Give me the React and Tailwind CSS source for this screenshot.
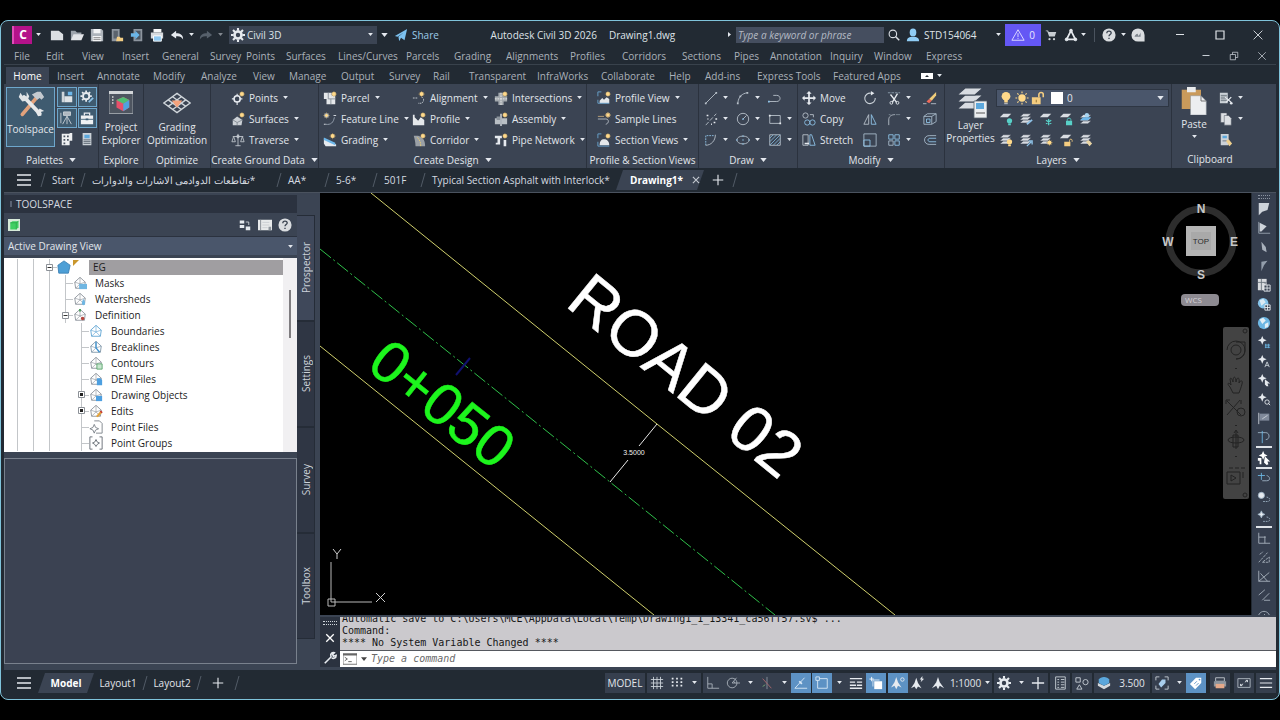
import React, { useState } from 'react';

const Caret = ({ big, className = '' }) => (
  <svg viewBox="0 0 8 5" className={`shrink-0 ${big ? 'w-[7px] h-1' : 'w-[5px] h-[3px]'} ${className}`}>
    <path d="M0 0h8L4 5z" fill="#e4e8ee" />
  </svg>
);

const Sun = ({ x = 12.5, y = 3.5 }) => (
  <g transform={`translate(${x} ${y})`}>
    <path d="M0-3.6V3.6M-3.6 0H3.6M-2.4-2.4 2.4 2.4M2.4-2.4-2.4 2.4" stroke="#b99a5c" strokeWidth=".8" />
    <circle r="2.3" fill="#ffd98a" />
  </g>
);

const Sheets = ({ y = 0 }) => (
  <g transform={`translate(0 ${y})`} fill="#d8dce2" stroke="#3b4453" strokeWidth=".6">
    <path d="M1 12.5 5 9h9l-4 3.5z" />
    <path d="M1 9 5 5.500h9L10 9z" />
    <path d="M1 5.500 5 2h9l-4 3.500z" />
  </g>
);

const W = '#e6eaef';
const B = '#8fc3e8';

// glyphs share a 16x16 grid
const glyphs = {
  // quick access
  newFile: <path d="M1 3h9l5 4v7H1z" fill="#dcdfe3" />,
  open: <g><path d="M1 14V3h5l2 2h5v2" fill="#9da4ac" /><path d="M1 14 4 7h12l-3 7z" fill="#e3e5e8" /></g>,
  save: <g><path d="M1 1h12l2 2v12H1z" fill="#aeb4bb" /><path d="M4 1h8v5H4zM3 9h10v6H3z" fill="#f2f3f4" /><path d="M4 11h8M4 13h8" stroke="#666" strokeWidth=".8" /></g>,
  cloudOpen: <g><path d="M2 1h9v14H2z" fill="#8d959e" /><path d="M4 3h5v9H4z" fill="#5b636d" /><path d="m7 15 1-5h3l1 1h3v4z" fill="#f2cd84" /></g>,
  cloudSave: <g><path d="M4 1h10v14H4z" fill="#8d959e" /><path d="M6 3h6v10H6z" fill="#4c5661" /><path d="M1 6h5V3l5 5-5 5v-3H1z" fill="#6bb6e8" /></g>,
  print: <g><path d="M4 1h9v4H4z" fill="#f5f6f7" /><path d="M1 5h14v7H1z" fill="#d5d9dd" /><path d="M4 9h9v6H4z" fill="#8fc8f0" stroke="#fff" /></g>,
  undo: <path d="M7 3 1 8l6 4V9.500c4-.5 6 .5 8 3.500 0-5-3-7-8-7z" fill={W} />,
  redo: <path d="m9 3 6 5-6 4V9.500c-4-.5-6 .5-8 3.500 0-5 3-7 8-7z" fill="#56606b" />,
  gear: <g><circle cx="8" cy="8" r="4" fill="none" stroke={W} strokeWidth="3" /><path d="M8 0v3M8 13v3M0 8h3M13 8h3M2.300 2.300l2.200 2.200M11.500 11.500l2.200 2.200M13.700 2.300l-2.200 2.200M4.500 11.500l-2.200 2.200" stroke={W} strokeWidth="2.400" /></g>,
  plane: <path d="M1 9 15 1l-3 13-4-3-2 4-1-5 6-5-7 5z" fill="#7cc1ef" />,
  search: <g fill="none" stroke="#d7dce2" strokeWidth="1.500"><circle cx="6.500" cy="6.500" r="5" /><path d="m10 10 5 5" strokeWidth="2" /></g>,
  user: <g fill="#90cdf5"><ellipse cx="8" cy="5" rx="3.800" ry="4.500" /><path d="M1 15c0-4 3-5 7-5s7 1 7 5z" /></g>,
  warn: <g fill="none" stroke="#e9e7ff"><path d="M8 2 15 14H1z" /><path d="M8 6v4.500M8 11.500v1" /></g>,
  cart: <g fill="#c8cdd2"><path d="M1 2h3l1 2h10l-2 6H5.500L3 3H1z" /><circle cx="6" cy="13.500" r="1.500" /><circle cx="12" cy="13.500" r="1.500" /></g>,
  adsk: <g fill="none" stroke={W}><path d="M8 3 3 13h10z" strokeWidth="2" /><circle cx="8" cy="3" r="1.600" fill={W} /><circle cx="3" cy="13" r="1.600" fill={W} /><circle cx="13" cy="13" r="1.600" fill={W} /></g>,
  help: <g><circle cx="8" cy="8" r="7.500" fill="#dadde0" /><path d="M5.500 6c0-3.500 5-3 5-.3C10.500 7.500 8 7.600 8 9.500M8 11v1.600" fill="none" stroke="#3a4350" strokeWidth="1.500" /></g>,
  badge: <g><path d="M8 .5A7.500 7.500 0 0 0 8 15.500h7.500V8A7.500 7.500 0 0 0 8 .5z" fill="#dadde0" /><path d="M4 10c2-4 4-4 4-2s2 0 3-3v5z" fill="#7d848c" /></g>,
  // ribbon
  tools: <g strokeLinecap="round"><path d="M11.500 4 3 14" stroke="#e2a27c" strokeWidth="2" /><path d="m4 4 9 9.500" stroke="#e6e8ea" strokeWidth="2.200" /><path d="M2 1.500 1 4l2 2.500 3-.5 1-2.500L5.500 1v2.500L3.500 4z" fill="#dfe3e6" /><path d="m8.500 2.500 3-1.500h2L15.500 4 14 5.500l-1-1-1.500 1z" fill="#c4cad0" /><path d="m11 13 2-2.500 2.500 1.500-2 .5.500 2-2 .5z" fill="#e6e8ea" /></g>,
  prospector: <g><path d="M2 2h3v12H2z" fill="#cfd5da" /><path d="M5 7h9v7H5z" fill="#dfe3e6" /><path d="M9 2h5v4H9z" fill="#6db7ea" /></g>,
  settingsG: <g><circle cx="7" cy="7" r="3.600" fill="none" stroke={W} strokeWidth="2.200" /><path d="M7 .5v2M7 11.500v2M.5 7h2M11.500 7h2M2.400 2.400l1.500 1.500M11.600 2.400l-1.500 1.500M2.400 11.600l1.500-1.500" stroke={W} strokeWidth="2" /><path d="m10 14 5-5" stroke={B} strokeWidth="2" /></g>,
  tripod: <g stroke="#ccd2d8" fill="none"><path d="M8 6 3 15M8 6l5 9M8 6v9M1 2v12" /><path d="M4 1h8v4H4z" fill="#aeb6be" /></g>,
  toolbox: <g><path d="M1 5h14v10H1z" fill="#eef0f2" /><path d="M5 5V2.500h6V5" fill="none" stroke={W} strokeWidth="1.500" /><path d="M1 9.500h14" stroke="#3a5d75" /><path d="M6.500 8.500h3v2h-3z" fill="#3a5d75" /></g>,
  building: <g><path d="M2 2h9v13H2zM11 1h3v9h-3z" fill="#eef0f2" /><path d="M4 4h2v2H4zM8 4h2v2H8zM4 8h2v2H4zM8 8h2v2H8zM4 12h2v2H4z" fill="#4a5361" /></g>,
  sheetSet: <g><path d="M3 1h10v14H3z" fill="#ccd2d8" /><path d="M5 3h6v4H5z" fill="#5da8dc" /><path d="M4 9h8M4 11h8M4 13h8" stroke="#56606b" /></g>,
  explorer: <g><path d="M0 0h16v15H0z" fill="#4e5560" stroke="#a1a7ae" strokeWidth=".6" /><path d="M0 0h16v2H0z" fill="#d3d6d9" /><path d="M2 4h1M2 6h1M2 8h1" stroke="#ddd" /><path d="m9.500 4 4 2v5l-4 2.500L5 11V6z" fill="#e7506b" /><path d="m9.500 4 4 2-4 2.500L5 6z" fill="#4fbf75" /><path d="m13.500 6-4 2.500v5l4-2.500z" fill="#4fa3e0" /></g>,
  grading: <g fill="none" stroke="#cfd5da" strokeWidth=".8"><path d="m8 2.500 7.500 5.500L8 13.500.5 8z" /><path d="M5.500 4.400 13 9.900M3 6.200l7.500 5.500M10.500 4.400 3 9.900M13 6.200l-7.500 5.500" /><path d="M5 6.500h6L8 10.500z" fill="#f4a27c" stroke="none" /></g>,
  points: <g><circle cx="7" cy="9" r="3.500" fill="none" stroke={W} strokeWidth="1.800" /><path d="M7 3v3M7 12v4M1 9h3M10 9h3" stroke={W} strokeWidth="1.300" /><Sun /></g>,
  surfaces: <g><path d="m2 9 5-4 6 4-1 6H2z" fill="#ccd1d6" /><path d="m2 9 5 3 6-3M7 12v3" stroke="#7f8891" fill="none" /><Sun /></g>,
  traverse: <g fill="none" stroke="#bec5cc"><path d="M2 4h12M8 1v14M3 4 1 10h4zM13 4l-2 6h4zM5 14.500h6" /><circle cx="8" cy="4" r="1.500" fill="#bec5cc" /></g>,
  parcel: <g><path d="M1 2h9v3h4v10H4V9H1z" fill="#e4e7ea" /><path d="M6 2v7h8M9 9v6" stroke="#848c95" fill="none" /><Sun /></g>,
  feature: <g fill="none" stroke="#9aa6b3"><path d="M3 14c6 1 9-2 10-8" /><path d="M1 14h2M12 4h3" stroke={W} /><Sun x={4} y={4} /></g>,
  slope: <g><path d="m1 6 14 7v2H3L1 12z" fill={W} /><path d="m1 5 13 6v3L1 8z" fill="#6db7ea" /><Sun x={11} y={3.5} /></g>,
  align: <g><path d="M1 8h6M11 7c3 1 3 5 0 7H7" fill="none" stroke="#ccd2d8" strokeDasharray="2 1" /><Sun x={11} /></g>,
  profile: <g><path d="M1 3h2v3l4 4 3-4 4 3v6H1z" fill="#e4e7ea" /><Sun /></g>,
  corridor: <g><path d="M2 3h5c7 2 8 7 8 12H4c0-5-1-8-2-12z" fill="#9aa0a6" /><path d="M6 5c3 3 4 6 4 10" stroke="#f0cf6a" strokeDasharray="2 1" fill="none" /><Sun /></g>,
  intersect: <g><path d="M5 2h6v14H5zM1 6h14v6H1z" fill="#a3a9ae" /><path d="M8 2v14M1 9h14" stroke="#eee" strokeDasharray="2 1" /><Sun /></g>,
  assembly: <g><path d="M1 7h6v7H1zM9 7h6v7H9z" fill="#b9bfc5" /><path d="M8 2v14" stroke={W} strokeWidth="1.500" /><path d="M3 5h4v4H3z" fill="#8b939b" /><Sun /></g>,
  pipe: <g><path d="M1 3h8v3H7v7H2v-2h2V6H1z" fill={W} /><path d="M11 8h3v7h-3z" fill={W} /><Sun /></g>,
  profView: <g><path d="M3 5v6l3-3 2 2 3-3 3 2v5H3z" fill="#e4e7ea" /><path d="M1 6V1h4M1 10v4h13" fill="none" stroke="#6aa7d4" /><Sun /></g>,
  sample: <g fill="none" stroke="#c3a87b"><path d="M1 8h9c4 0 4 5 0 6" stroke="#b9c1c9" /><path d="M1 5h7" /><Sun /></g>,
  secView: <g><path d="M3 14c0-5 2-7 5-7s6 2 6 7z" fill="#e4e7ea" /><path d="M1 6V1h4M1 10v5h13" fill="none" stroke="#6aa7d4" /><Sun /></g>,
  line: <g stroke="#b9c2cb" fill="#b9c2cb"><path d="M2 14 14 2" /><path d="M1 13h2v2H1zM13 1h2v2h-2z" stroke="none" /></g>,
  arc: <g stroke="#b9c2cb" fill="none"><path d="M2 14C3 6 7 3 13 2" /><path d="M1 13h2v2H1zM12 1h2v2h-2zM4 5h2v2H4z" fill="#b9c2cb" stroke="none" /></g>,
  pline: <g stroke="#b9c2cb" fill="none"><path d="M1 12h9c5 0 5-7 0-7H6" /><path d="M0 11h2v2H0z" fill={B} stroke="none" /></g>,
  dots: <g stroke="#b9c2cb"><path d="M2 15 14 2" strokeDasharray="5 2" /><path d="M3 4h2M11 12h2M4 8h1M8 14h1M13 8h2" stroke={W} strokeWidth="1.500" /></g>,
  circle: <g stroke="#b9c2cb" fill="none"><circle cx="8" cy="8" r="6.500" /><path d="m8 8 4-4" /><circle cx="8" cy="8" r="1" fill={B} stroke="none" /></g>,
  rect: <g stroke="#b9c2cb" fill="none"><path d="M2 4h12v9H2z" /><path d="M1 3h2v2H1zM13 12h2v2h-2z" fill={W} stroke="none" /></g>,
  spline: <g stroke="#b9c2cb" fill="none"><path d="M2 14V3h10" strokeDasharray="2 1" stroke={B} /><path d="M2 14c6 0 11-5 11-12" /></g>,
  ellipse: <g stroke="#b9c2cb" fill="none"><ellipse cx="8" cy="8" rx="7" ry="4.500" /><path d="M8 7v2M1 7v2M15 7v2M7 3.500h2M7 12.500h2" stroke={B} /></g>,
  hatch: <g stroke="#7fb0d0" fill="none"><path d="M2 2h12v12H2z" stroke="#b9c2cb" /><path d="m2 6 4-4M2 10l8-8M2 14 14 2M6 14l8-8M10 14l4-4" /></g>,
  move: <path d="M8 0 5 3h2v4H3V5L0 8l3 3V9h4v4H5l3 3 3-3H9V9h4v2l3-3-3-3v2H9V3h2z" fill={W} />,
  copy: <g fill="none" stroke="#b9c2cb"><circle cx="4" cy="4" r="3" /><path d="M9 3h4v3" /><circle cx="6" cy="12" r="3" stroke={B} /><circle cx="12" cy="12" r="3" stroke={B} /></g>,
  stretch: <g fill="none" stroke="#b9c2cb"><path d="M1 2h6v12H1z" /><path d="m9 2 2 0 4 12H9z" stroke={B} /><path d="M3 12h5" stroke={W} strokeWidth="1.500" /></g>,
  rotate: <g fill="none" stroke="#ccd3da" strokeWidth="1.200"><path d="M9 2.500A6 6 0 1 0 14 8" /><path d="M9 0v5l4-2.500z" fill={W} stroke="none" /></g>,
  trim: <g fill="none" stroke={W}><path d="M4 4l7 9M12 3 6 13" strokeWidth="1.500" /><circle cx="5" cy="13.500" r="1.600" /><circle cx="12" cy="13.500" r="1.600" /><path d="M1 2h14" stroke="#8ea0b0" strokeDasharray="3 1" /></g>,
  erase: <g><path d="m15 1-8 8 3 2 5-6z" fill="#f0cd7a" /><path d="m7 9-3 3 3 2 3-3z" fill="#ef6a5a" /><path d="M0 14.500h4M9 14.500h6" stroke="#b9c2cb" /></g>,
  mirror: <g fill="none" stroke="#b9c2cb"><path d="M6.500 3v11H1z" /><path d="M9.500 3v11H15z" stroke={B} /></g>,
  fillet: <g fill="none" stroke="#b9c2cb"><path d="M2 15V9c0-4 3-6 7-6" /><path d="M10 3h5M2 3h2" stroke="#7c8896" /></g>,
  box: <g fill="none" stroke="#a9bccb"><path d="M1 5h9v9H1z" /><path d="m1 5 4-3h10v9l-5 3M10 5l5-3" /><path d="M4 8h4v4H4z" stroke={B} /></g>,
  scale: <g fill="none" stroke="#a9bccb"><path d="M1 1h14v14H1z" /><path d="M1 8h7v7H1z" stroke={B} /></g>,
  array: <g fill="none" stroke="#a9bccb"><path d="M2 2h5v5H2zM9 2h5v5H9zM9 9h5v5H9z" stroke={B} /><path d="M2 9h5v5H2z" /></g>,
  offset: <g fill="none" stroke="#a9bccb"><path d="M15 3H7C0 3 0 13 7 13h8" /><path d="M15 6H8c-3 0-3 4 0 4h7" stroke={B} /></g>,
  layersBig: <g><Sheets y={-1.5} /><path d="M9.500 7H16v8.500H9.500z" fill="#eceef0" stroke="#5b6470" strokeWidth=".4" /><path d="M10.500 8h4v3h-4z" fill="#5da8dc" /><path d="M10.500 13h4.500" stroke="#555" strokeWidth=".6" /></g>,
  bulb: <g><circle cx="8" cy="6" r="5" fill="#ffd98a" /><path d="M6 10h4v3H6z" fill="#ffd98a" /><path d="M6 14.500h4" stroke="#ddd" /></g>,
  sun: <g><circle cx="8" cy="8" r="4.200" fill="#ffd98a" /><path d="M8 .5v2M8 13.500v2M.5 8h2M13.500 8h2M2.700 2.700l1.400 1.400M11.900 11.900l1.400 1.400M13.300 2.700l-1.400 1.400M4.100 11.900l-1.400 1.400" stroke="#ffd98a" strokeWidth="1.300" /></g>,
  unlock: <g><path d="M1 7h10v8H1z" fill="#f5cd80" /><path d="M9 7V4c0-3 5-3 5 0v3" fill="none" stroke="#f5cd80" strokeWidth="1.800" /><path d="M6 10v3" stroke="#8a6a2c" /></g>,
  lay1: <g><path d="M1 6 5 2h9l-4 4z" fill="#d8dce2" /><circle cx="12" cy="10" r="3" fill="#58d0c8" /><path d="M10.500 13h3v2h-3z" fill="#58d0c8" /></g>,
  lay2: <g><Sheets /><path d="m9 14 6-5" stroke={B} strokeWidth="2" /></g>,
  lay3: <g><path d="M1 6 5 2h9l-4 4z" fill="#d8dce2" /><path d="M11 8v7M8 9.500l6 4M14 9.500l-6 4" stroke="#58d0c8" strokeWidth="1.500" /></g>,
  lay4: <g><path d="M1 6 5 2h9l-4 4z" fill="#d8dce2" /><path d="M8 10h7v5H8z" fill="#58d0c8" /><path d="M9.500 10V8.500c0-2 4-2 4 0V10" fill="none" stroke="#58d0c8" /></g>,
  lay5: <g><Sheets y={1} /><path d="M1 9.500 5 6h9l-4 3.500z" fill="#6db7ea" /><circle cx="9" cy="3.500" r="2.500" fill="#a8d5f2" /></g>,
  lay6: <g><Sheets /><circle cx="12" cy="10" r="3" fill="#ffd98a" /><path d="M10.500 13h3v2h-3z" fill="#ffd98a" /></g>,
  lay7: <g><Sheets /><path d="m9 15 5-5M11 9h4v4" stroke={B} strokeWidth="1.500" fill="none" /></g>,
  lay8: <g><Sheets /><Sun x={12} y={11} /></g>,
  lay9: <g><path d="M1 6 5 2h9l-4 4z" fill="#d8dce2" /><path d="M6 10h7v5H6z" fill="#f5cd80" /><path d="M12 10V8.500c0-2 3-2 3 0V10" fill="none" stroke="#f5cd80" /></g>,
  lay10: <g><Sheets /><path d="m8 10 3-2 4 4-3 3z" fill="#e9d5a5" /></g>,
  paste: <g><path d="M1 1.500h11v11H1z" fill="#c99a5b" /><path d="M4 0h5v3H4z" fill="#e9ebed" /><path d="M6 5h6l3 3v8H6z" fill="#eceef0" stroke="#8b929a" strokeWidth=".3" /><path d="M12 5v3h3" fill="none" stroke="#666" strokeWidth=".5" /></g>,
  cut: <g><path d="M1 2h9v12H1z" fill="#ccd2d8" /><path d="M2 5h7M2 7h7M2 9h7M2 11h7" stroke="#68717c" /><path d="m7 7 7 6M14 7l-6 6" stroke={W} strokeWidth="1.500" /><circle cx="14" cy="14" r="1.500" fill={W} /></g>,
  copyClip: <g fill="#dde0e4" stroke="#4c5562" strokeWidth=".6"><path d="M2 1h7v11H2z" /><path d="M6 4h5l3 3v8H6z" /></g>,
  match: <g><path d="M2 1h9v13H2z" fill="#ccd2d8" /><path d="M4 3h5v3H4z" fill="#5da8dc" /><path d="M4 9h5" stroke="#68717c" /><path d="m8 9 3-2 4 5-3 3z" fill="#efd08e" /></g>,
  // toolspace header
  drawing: <g><path d="M0 0h16v16H0z" fill="#d7ead9" /><path d="M3 5 6 3h8v8l-3 3H3z" fill="#3fcf62" /><path d="M3 5h8v9M11 5l3-2" stroke="#2ba64a" fill="none" /></g>,
  panorama: <g fill={W}><path d="M1 2h6v4H1zM1 8h6v4H1zM9 10h6v5H9z" /><path d="M9 4h4v4" fill="none" stroke={W} /></g>,
  preview: <g><path d="M0 2h16v12H0z" fill="#e8eaeb" /><path d="M3 2v12" stroke="#7d848c" /><path d="M5 5h8M5 8h8M5 11h6" stroke="#b4b9be" strokeWidth=".6" /><path d="M12 10h3v4h-3z" fill="#8d949c" /></g>,
  // status bar
  grid: <path d="M4 1v14M8 1v14M12 1v14M1 4h14M1 8h14M1 12h14" stroke="#ccd2d9" fill="none" />,
  snapDots: <path d="M2 3h2M7 3h2M12 3h2M2 7h2M7 7h2M12 7h2M2 11h2M7 11h2M12 11h2" stroke={W} strokeWidth="1.800" />,
  ortho: <path d="M2 1v13h13M2 9h5v5" stroke="#aab2bc" fill="none" />,
  polar: <g fill="none" stroke="#aab2bc"><circle cx="7" cy="8" r="5.500" /><path d="M7 8h9M7 8l5-6M10 8a3 3 0 0 0-1-2" /></g>,
  iso: <g fill="none"><path d="M8 1v14" stroke="#8c95a0" /><path d="m3 3 10 11" stroke="#b06a70" /><path d="m3 12 3-2" stroke="#78a878" /></g>,
  otrack: <g stroke="#dbeaf7" fill="none"><path d="M1 14 12 2M1 14h14" /><path d="m6 6 3 3" strokeWidth="2" /></g>,
  osnap: <g fill="none" stroke="#dbeaf7"><path d="M3 3h11v11H3z" /><path d="M1 1h4v4H1z" fill="#5d92c4" /></g>,
  lineweight: <path d="M1 3h14M1 7h6M9 7h6M1 10.500h7M9 10.500h6M1 14h14" stroke={W} strokeWidth="1.700" />,
  cycling: <g fill="#fff"><path d="M6 6h9v9H6z" /><path d="M3 1v5M.5 3.500h5" stroke="#fff" /><path d="M4 4h8v1H5v7H4z" fill="#d7e6f3" /></g>,
  annoA: <g fill={W}><path d="m6 1 2 6 4 6-4-2-2 4-2-4-4 2 4-6z" /><circle cx="13" cy="4" r="2" fill="none" stroke={W} /></g>,
  annoB: <g fill={W}><path d="m6 2 2 6 4 6-4-2-2 3-2-3-4 2 4-6z" /><path d="m13 0-3 4h2l-1 3 4-4h-2z" /></g>,
  annoC: <path d="m8 1 2 6 5 7-5-3-2 4-2-4-5 3 5-7z" fill={W} />,
  plus: <path d="M8 1v14M1 8h14" stroke={W} strokeWidth="1.500" />,
  calc: <g fill="none" stroke="#ccd2d9"><path d="M3 1h11v14H3z" /><path d="M5 4h2M5 7h2M5 10h2M5 13h2M9 4h4M9 7h4M9 10h4M9 13h4" /></g>,
  shapes: <g fill="none" stroke="#ccd2d9"><path d="M1 2h5v5H1zM5 10l3 5H2z" /><circle cx="12" cy="7" r="3" /></g>,
  elev: <g><path d="m1 8 7 3 7-3v3l-7 4-7-4z" fill="#d5dade" /><path d="M2 4c2-4 10-4 12 0v4l-6 3-6-3z" fill="#5ba7dc" /></g>,
  target: <g><path d="M1 5V1h4M11 1h4v4M15 11v4h-4M5 15H1v-4" fill="none" stroke="#ccd2d9" /><path d="m4 9 4-5h4v4l-5 5z" fill="#a8cdeb" /></g>,
  tag: <g><path d="M1 9 8 2h6v6l-7 7z" fill="#fff" /><path d="m6 9 3-3M8 11l3-3" stroke="#5d92c4" /><circle cx="12" cy="4" r="1" fill="#5d92c4" /></g>,
  plot: <g><path d="M3 2h10v4H3z" fill="none" stroke="#c3c9d0" /><path d="M1 6h14v6H1z" fill="#8d959e" /><path d="M3 9h10v5H3z" fill="#e6a98a" /></g>,
  full: <g fill="none" stroke="#b4bcc5"><path d="M1 3h14v10H1z" /><path d="M4 9v2h2M12 7V5h-2M4 11l3-2M12 5 9 7" stroke={W} /></g>,
  burger: <path d="M1 3h14M1 8h14M1 13h14" stroke={W} strokeWidth="1.300" />,
  wrench: <path d="m2 14 8-8M9 6c-1-3 2-5 4-4l-2 2 1 2 3-1c0 3-3 4-5 3" stroke={W} strokeWidth="1.800" fill="none" />,
  cross: <path d="m3 3 10 10M13 3 3 13" stroke="currentColor" strokeWidth="1.800" />,
  crossThin: <path d="m3 3 10 10M13 3 3 13" stroke="currentColor" />,
  minimize: <path d="M4 7.500h8" stroke="currentColor" strokeWidth="1.200" />,
  maximize: <path d="M4 4h8v8H4z" fill="none" stroke="currentColor" strokeWidth="1.200" />,
  restore: <path d="M3 6h7v7H3zM6 6V3h7v7h-3" fill="none" stroke="currentColor" />,
  prompt: <g><path d="M0 2h16v12H0z" fill="#fff" stroke="#666" /><path d="M0 3h16" stroke="#666" strokeWidth="2" /><path d="m2 6 3 2-3 2M6 11h4" fill="none" stroke="#555" /></g>,
  // transparent command toolbar
  t1: <path d="M2 1h12l-2 8-6 2-4 4z" fill="#cdd3da" />,
  t2: <g><path d="M2 1v13h13" stroke="#9aa5b1" fill="none" /><path d="M3 2 11 6 5 12H3z" fill="#cdd3da" /></g>,
  t3: <path d="m5 2 5 6 1 6-5-3z" fill="#a8b1bc" />,
  t4: <path d="M5 14V3l7-1-4 5z" fill="#939eab" />,
  t5: <g><path d="M1 1h10v13H1z" fill="#d8dbdf" /><path d="M1 5h10M5 1v13M8 5l3 3" stroke="#68717c" /><path d="M8 8h7v7H8zM11.500 8v7M8 11.500h7" fill="#3b4453" stroke={W} /></g>,
  t6: <g><circle cx="7" cy="7" r="6" fill="#86c4ea" /><path d="m3 4 4-2 3 4-5 4zM9 8l3 1-2 3z" fill="#dcebf4" /><path d="M9 9h6v6H9zM12 9v6M9 12h6" fill="#3b4453" stroke={W} /></g>,
  t7: <g><circle cx="8" cy="8" r="7" fill="#6db7e4" /><path d="m3 4 4-2 3 3-4 4zM9 9l4-2v5l-4 2z" fill="#e3eff6" /></g>,
  t8: <g><path d="m6 1 1.500 3.500L11 6 7.500 7.500 6 11 4.500 7.500 1 6l3.500-1.500z" fill={W} /><path d="M10 10v5M13 10v5M9 11.500h6M9 14h6" stroke="#6db7e4" /></g>,
  t9: <g><path d="m6 1 1.500 3.500L11 6 7.500 7.500 6 11 4.500 7.500 1 6l3.500-1.500z" fill={W} /><path d="m9 15 2.500-6L14 15M10 13h3" stroke="#cdd3da" fill="none" /></g>,
  t10: <g fill={W}><path d="m6 1 1.500 3.500L11 6 7.500 7.500 6 11 4.500 7.500 1 6l3.500-1.500z" /><path d="m9 7 6 5h-3l1 3h-2l-2-2z" /></g>,
  t11: <g><path d="m6 1 1.500 3.500L11 6 7.500 7.500 6 11 4.500 7.500 1 6l3.500-1.500z" fill={W} /><circle cx="11.500" cy="11.500" r="2.500" fill="none" stroke={W} /><path d="m13 13 2 2" stroke={W} /></g>,
  t12: <g><path d="M3 3h11v8H3z" fill="#7f899a" /><path d="M2 2v13M6 9l6-4" stroke="#cdd3da" /></g>,
  t13: <g fill="none" stroke="#9fb4c6"><path d="M1 3h9c5 0 5 8 0 8" /><path d="M6 1v14" stroke="#6db7e4" /></g>,
  t14: <g fill="#fff"><path d="m7 0 1.500 3.500L12 5 8.500 6.500 7 10 5.500 6.500 2 5l3.500-1.500z" /><path d="M1 8h4v7H3v-4H1zM9 6l6 6h-3l1 3-2 1-3-3z" /></g>,
  t15: <g fill="none" stroke="#9fb4c6"><path d="M6 10h5c5 0 4-5 0-6" /><path d="M1 4h8M5 1v8" stroke="#6db7e4" /></g>,
  t16: <g fill="none" stroke="#9fb4c6"><circle cx="5" cy="5" r="3.500" fill={W} /><path d="M7 12h5c4 0 3-5-1-5" strokeDasharray="2 1" /></g>,
  t17: <g fill="none" stroke="#9fb4c6"><path d="m5 1 1.200 2.800L9 5 6.200 6.200 5 9 3.800 6.200 1 5l2.800-1.200z" fill={W} /><path d="M7 13h5c4 0 3-5-1-5" strokeDasharray="2 1" /></g>,
  t18: <g fill="none" stroke="#a9b3be"><path d="M2 2v12M2 7h8M9 6v8M2 14h13" /></g>,
  t19: <g fill="none" stroke="#a9b3be"><path d="M2 14 12 3M3 5l4-3M6 14h8V8z" strokeDasharray="3 1" /></g>,
  t20: <g fill="none" stroke="#a9b3be"><path d="M2 2v12h13M2 14 14 4M4 5l8 9" /></g>,
  t21: <g fill="none" stroke="#a9b3be"><path d="M2 8 9 2M6 14l8-8M8 14h7" /></g>,
  t22: <g fill="none" stroke="#a9b3be"><path d="M2 14A6.500 6.500 0 1 1 14 14M8 8l4 4" /></g>,
};

const Icon = ({ name, className = 'w-4 h-4' }) => (
  <svg viewBox="0 0 16 16" className={`shrink-0 ${className}`} aria-hidden="true">
    {glyphs[name]}
  </svg>
);

const IconBtn = ({ name, label, className = 'w-5', icon = 'w-4 h-4' }) => (
  <button type="button" aria-label={label || name} className={`flex items-center justify-center h-full shrink-0 ${className}`}>
    <Icon name={name} className={icon} />
  </button>
);

const menus = [
  ['File', 'w-8'], ['Edit', 'w-9'], ['View', 'w-10'], ['Insert', 'w-10'], ['General', 'w-12'],
  ['Survey', 'w-9'], ['Points', 'w-10'], ['Surfaces', 'w-13'], ['Lines/Curves', 'w-17'],
  ['Parcels', 'w-12'], ['Grading', 'w-13'], ['Alignments', 'w-16'], ['Profiles', 'w-13'],
  ['Corridors', 'w-15'], ['Sections', 'w-13'], ['Pipes', 'w-9'], ['Annotation', 'w-15'],
  ['Inquiry', 'w-11'], ['Window', 'w-13'], ['Express', 'w-12'],
];

const ribbonTabs = [
  ['Insert', 'w-10'], ['Annotate', 'w-14'], ['Modify', 'w-12'], ['Analyze', 'w-13'],
  ['View', 'w-9'], ['Manage', 'w-13'], ['Output', 'w-12'], ['Survey', 'w-11'], ['Rail', 'w-9'],
  ['Transparent', 'w-17'], ['InfraWorks', 'w-16'], ['Collaborate', 'w-17'], ['Help', 'w-9'],
  ['Add-ins', 'w-13'], ['Express Tools', 'w-19'], ['Featured Apps', 'w-22'],
];

const TitleBar = () => (
  <header className="flex items-center h-[27px] shrink-0">
    <div className="flex items-center h-full pl-2">
      <button type="button" aria-label="Application menu" className="flex items-center">
        <span className="w-5 h-[18px] bg-[#b4128a] border-l-2 border-[#e04cb8] text-white font-bold text-xs leading-[17px] text-center">C</span>
        <Caret className="mx-1" />
      </button>
      <div className="flex items-center h-full pl-0.5">
        <IconBtn name="newFile" label="New" icon="w-3.5 h-3.5" />
        <IconBtn name="open" label="Open" icon="w-3.5 h-3.5" />
        <IconBtn name="save" label="Save" icon="w-3.5 h-3.5" />
        <IconBtn name="cloudOpen" label="Open from web" icon="w-3.5 h-3.5" />
        <IconBtn name="cloudSave" label="Save to web" icon="w-3.5 h-3.5" />
        <IconBtn name="print" label="Plot" icon="w-3.5 h-3.5" />
        <IconBtn name="undo" label="Undo" icon="w-3.5 h-3.5" />
        <Caret className="mx-0.5" />
        <IconBtn name="redo" label="Redo" icon="w-3.5 h-3.5" />
        <Caret className="mx-0.5 opacity-50" />
      </div>
      <div className="flex items-center w-37 h-[18px] ml-1 bg-[#3b4453] pl-0.5 pr-1">
        <Icon name="gear" className="w-3.5 h-3.5" />
        <select aria-label="Workspace" className="flex-1 appearance-none bg-transparent outline-none pl-0.5">
          <option>Civil 3D</option>
        </select>
        <Caret />
      </div>
      <Caret big className="mx-1" />
      <button type="button" className="flex items-center gap-1 pl-0.5 text-[#9ccbe9]">
        <Icon name="plane" className="w-3.5 h-3.5" />
        Share
      </button>
    </div>

    <h1 className="flex-1 flex justify-center gap-3 whitespace-nowrap">
      <span>Autodesk Civil 3D 2026</span>
      <span>Drawing1.dwg</span>
    </h1>

    <div className="flex items-center h-full">
      <Caret className="-rotate-90 mr-1" />
      <input aria-label="Search" placeholder="Type a keyword or phrase" className="w-37 h-4 bg-[#454e5f] px-0.5 italic outline-none placeholder:text-[#b4bac4]" />
      <IconBtn name="search" label="Search help" icon="w-3 h-3" />
      <button type="button" className="flex items-center gap-1 w-21 pl-0.5">
        <Icon name="user" className="w-3.5 h-3.5" />
        STD154064
      </button>
      <Caret className="ml-2 mr-1" />
      <button type="button" className="flex items-center justify-center gap-1 w-9 h-5.5 bg-[#6457f5] text-[#e9e7ff]">
        <Icon name="warn" className="w-3.5 h-3.5" />0
      </button>
      <IconBtn name="cart" label="App store" icon="w-3 h-3" />
      <IconBtn name="adsk" label="Autodesk app" icon="w-3.5 h-3.5" />
      <Caret className="mr-2" />
      <span className="w-px h-3.5 bg-[#4a535e] mr-1" />
      <IconBtn name="help" label="Help" icon="w-3.5 h-3.5" />
      <Caret className="mx-0.5" />
      <IconBtn name="badge" label="Feedback" icon="w-3.5 h-3.5" />
      <div className="flex h-full pl-3">
        <IconBtn name="minimize" label="Minimize" className="w-10" icon="w-4 h-4" />
        <IconBtn name="maximize" label="Maximize" className="w-10" icon="w-4 h-4" />
        <IconBtn name="crossThin" label="Close" className="w-9" icon="w-3.5 h-3.5" />
      </div>
    </div>
  </header>
);

const MenuBar = () => (
  <nav className="flex items-center h-[17px] shrink-0 pl-2.5 text-[#aab1b9] border-b border-[#39424c]">
    {menus.map(([label, width]) => (
      <button type="button" key={label} className={`${width} shrink-0 text-left whitespace-nowrap`}>{label}</button>
    ))}
    <div className="ml-auto flex h-full text-[#c8ced5]">
      <IconBtn name="minimize" label="Minimize drawing" className="w-7" icon="w-3.5 h-3.5" />
      <IconBtn name="restore" label="Restore drawing" className="w-7" icon="w-3 h-3" />
      <IconBtn name="crossThin" label="Close drawing" className="w-7" icon="w-3 h-3" />
    </div>
  </nav>
);

const RibbonTabs = () => (
  <nav className="flex items-end h-[19px] shrink-0 pl-0.5 text-[#aab1b9]">
    <button type="button" className="w-[43px] h-[17px] bg-[#3b4453] text-white shrink-0">Home</button>
    <div className="flex items-center h-[17px] pl-2">
      {ribbonTabs.map(([label, width]) => (
        <button type="button" key={label} className={`${width} shrink-0 text-left whitespace-nowrap`}>{label}</button>
      ))}
      <button type="button" aria-label="Ribbon display" className="flex items-center gap-1">
        <span className="flex items-center justify-center w-3 h-1.5 bg-white">
          <svg viewBox="0 0 4 2" className="w-1 h-0.5"><path d="M0 2h4L2 0z" fill="#222a33" /></svg>
        </span>
        <Caret />
      </button>
    </div>
  </nav>
);

const Panel = ({ title, caret, className, children }) => (
  <section className={`flex flex-col shrink-0 pt-[3px] border-r border-[#2b323e] ${className}`}>
    <div className="flex h-16">{children}</div>
    <button type="button" className="flex items-center justify-center gap-1.5 h-[17px] whitespace-nowrap">
      {title}
      {caret && <Caret big />}
    </button>
  </section>
);

const Cmd = ({ icon, label, caret }) => (
  <button type="button" className="flex items-center h-[21px] whitespace-nowrap">
    <Icon name={icon} className="w-3.5 h-3.5" />
    <span className="pl-1 pr-[5px]">{label}</span>
    {caret && <Caret />}
  </button>
);

const Column = ({ items, className = '' }) => (
  <div className={`flex flex-col ${className}`}>
    {items.map(([icon, label, caret]) => (
      <Cmd key={label} icon={icon} label={label} caret={caret} />
    ))}
  </div>
);

// icon-only commands, the names listed in carets get a drop-down arrow
const IconColumn = ({ items, carets = [], className = 'w-8' }) => (
  <div className={`flex flex-col ${className}`}>
    {items.map((name) => (
      <div key={name} className="flex items-center h-[21px]">
        <IconBtn name={name} icon="w-3.5 h-3.5" />
        {carets.includes(name) && <Caret className="ml-0.5" />}
      </div>
    ))}
  </div>
);

const BigButton = ({ icon, lines, className = '', iconClass = 'w-7 h-7' }) => (
  <button type="button" className={`flex flex-col items-center leading-[13px] ${className}`}>
    <Icon name={icon} className={iconClass} />
    {lines.map((l) => <span key={l}>{l}</span>)}
  </button>
);

const paletteIcons = [
  ['prospector', true], ['settingsG', true], ['tripod', true], ['toolbox', true], ['building', false], ['sheetSet', false],
];

const Ribbon = () => (
  <div className="flex h-[84px] shrink-0 bg-[#3b4453] text-[#e2e6eb]">
    <Panel title="Palettes" caret className="w-[95px]">
      <button type="button" className="flex flex-col items-center w-[49px] h-[60px] ml-0.5 pt-0.5 gap-1 bg-[#3f5b70] border border-[#6ea7cc]">
        <Icon name="tools" className="w-7 h-7" />
        Toolspace
      </button>
      <div className="grid grid-cols-2 grid-rows-3 gap-px w-10 h-[62px] ml-0.5">
        {paletteIcons.map(([name, on]) => (
          <button
            type="button"
            key={name}
            aria-label={name}
            className={`flex items-center justify-center ${on ? 'bg-[#3f5b70] border border-[#6ea7cc]' : ''}`}
          >
            <Icon name={name} className="w-3.5 h-3.5" />
          </button>
        ))}
      </div>
    </Panel>

    <Panel title="Explore" className="w-[45px]">
      <BigButton icon="explorer" iconClass="w-6 h-6 mt-1 mb-1.5" lines={['Project', 'Explorer']} className="w-full" />
    </Panel>

    <Panel title="Optimize" className="w-[67px]">
      <BigButton icon="grading" iconClass="w-7 h-7 mt-0.5 mb-1" lines={['Grading', 'Optimization']} className="w-full" />
    </Panel>

    <Panel title="Create Ground Data" caret className="w-[108px]">
      <Column
        className="pl-5"
        items={[['points', 'Points', true], ['surfaces', 'Surfaces', true], ['traverse', 'Traverse', true]]}
      />
    </Panel>

    <Panel title="Create Design" caret className="w-[268px]">
      <Column
        className="pl-1 w-[93px] shrink-0"
        items={[['parcel', 'Parcel', true], ['feature', 'Feature Line', true], ['slope', 'Grading', true]]}
      />
      <Column
        className="w-[82px] shrink-0"
        items={[['align', 'Alignment', true], ['profile', 'Profile', true], ['corridor', 'Corridor', true]]}
      />
      <Column
        items={[['intersect', 'Intersections', true], ['assembly', 'Assembly', true], ['pipe', 'Pipe Network', true]]}
      />
    </Panel>

    <Panel title="Profile & Section Views" className="w-[112px]">
      <Column
        className="pl-2.5"
        items={[['profView', 'Profile View', true], ['sample', 'Sample Lines'], ['secView', 'Section Views', true]]}
      />
    </Panel>

    <Panel title="Draw" caret className="w-[99px]">
      <div className="flex pl-0.5">
        <IconColumn items={['line', 'dots', 'spline']} carets={['line', 'dots', 'spline']} />
        <IconColumn items={['arc', 'circle', 'ellipse']} carets={['arc', 'circle', 'ellipse']} />
        <IconColumn items={['pline', 'rect', 'hatch']} carets={['rect', 'hatch']} />
      </div>
    </Panel>

    <Panel title="Modify" caret className="w-[147px]">
      <Column
        className="pl-1 w-[62px]"
        items={[['move', 'Move'], ['copy', 'Copy'], ['stretch', 'Stretch']]}
      />
      <IconColumn className="w-6" items={['rotate', 'mirror', 'scale']} />
      <IconColumn className="w-9" items={['trim', 'fillet', 'array']} carets={['trim', 'fillet', 'array']} />
      <IconColumn className="w-5" items={['erase', 'box', 'offset']} />
    </Panel>

    <Panel title="Layers" caret className="w-[227px]">
      <BigButton icon="layersBig" iconClass="w-8 h-8" lines={['Layer', 'Properties']} className="w-[51px] shrink-0" />
      <div className="flex flex-col flex-1 pr-0.5">
        <div className="flex items-center h-[21px]">
          <div className="flex items-center gap-0.5 w-full h-[18px] pl-0.5 pr-1 bg-[#4a566b] border border-[#2e3643]">
            <Icon name="bulb" className="w-3.5 h-3.5" />
            <Icon name="sun" className="w-3.5 h-3.5" />
            <Icon name="unlock" className="w-3.5 h-3.5" />
            <span className="w-3 h-3 ml-1 bg-white" />
            <select aria-label="Layer" className="flex-1 appearance-none bg-transparent outline-none pl-0.5">
              <option>0</option>
            </select>
            <Caret big />
          </div>
        </div>
        <div className="flex h-[21px]">
          {['lay1', 'lay2', 'lay3', 'lay4', 'lay5'].map((n) => <IconBtn key={n} name={n} icon="w-3.5 h-3.5" />)}
        </div>
        <div className="flex h-[21px]">
          {['lay6', 'lay7', 'lay8', 'lay9', 'lay10'].map((n) => <IconBtn key={n} name={n} icon="w-3.5 h-3.5" />)}
        </div>
      </div>
    </Panel>

    <section className="flex flex-col flex-1 pt-[3px]">
      <div className="flex h-16">
        <button type="button" className="flex flex-col items-center w-11">
          <Icon name="paste" className="w-7 h-7 mb-0.5" />
          Paste
          <Caret className="mt-1" />
        </button>
        <IconColumn items={['cut', 'copyClip', 'match']} carets={['cut', 'copyClip']} />
      </div>
      <span className="h-[17px] leading-[17px] w-19 text-center">Clipboard</span>
    </section>
  </div>
);

const fileTabs = [
  ['Start', 'w-10'],
  ['تقاطعات الدوادمى الاشارات والدوارات*', 'w-49'],
  ['AA*', 'w-12'],
  ['5-6*', 'w-12'],
  ['501F', 'w-12'],
  ['Typical Section Asphalt with Interlock*', 'w-49'],
];

const Slash = () => (
  <svg viewBox="0 0 6 14" className="w-1.5 h-3.5 shrink-0"><path d="M1 14 5 0" stroke="#525b67" /></svg>
);

const FileTabs = () => (
  <div className="flex items-center h-6 shrink-0 pl-2.5 text-[#d5dae0]">
    <IconBtn name="burger" label="Drawings" />
    <div className="w-1.5" />
    {fileTabs.map(([label, width]) => (
      <button type="button" key={label} className={`flex items-center gap-1.5 shrink-0 whitespace-nowrap ${width}`}>
        <Slash />
        <span>{label}</span>
      </button>
    ))}
    <div className="relative flex items-center h-5 w-[88px] pl-3.5 gap-2">
      <svg viewBox="0 0 88 19" preserveAspectRatio="none" className="absolute inset-0 w-full h-full">
        <path d="M7 0h81l-7 19H0z" fill="#3b4453" />
      </svg>
      <button type="button" className="relative font-bold text-white">Drawing1*</button>
      <button type="button" aria-label="Close Drawing1" className="relative text-[#c3c9d0]">
        <Icon name="cross" className="w-2.5 h-2.5" />
      </button>
    </div>
    <IconBtn name="plus" label="New drawing" className="w-7" icon="w-3 h-3" />
    <Slash />
  </div>
);

// surface definition tree
const House = ({ tone = '#8a9199', children }) => (
  <svg viewBox="0 0 16 16" className="w-3.5 h-3.5 shrink-0" fill="none">
    <path d="M2 7 8 1.500 14 7l-1 7H3z" stroke={tone} fill="#fff" />
    <path d="M8 2v7l-5 5M8 9l5 5M2 7l6 2 6-2" stroke={tone} strokeWidth=".7" />
    {children}
  </svg>
);

const treeIcons = {
  eg: <svg viewBox="0 0 16 16" className="w-3.5 h-3.5 shrink-0"><path d="M1 6 8 1l7 5-2 9H2z" fill="#4d9fd6" stroke="#3a80b3" /></svg>,
  mask: <House><path d="M7 9h9v6H7z" fill="#6fb6e2" /></House>,
  water: <House><path d="M12 8c3 4 2 7 0 7s-3-3 0-7z" fill="#6fb6e2" /></House>,
  def: <House><circle cx="11" cy="12" r="2" fill="#b5453c" /><path d="M8 1v3" stroke="#3f9c54" strokeWidth="2" /></House>,
  bound: <House tone="#5da3d2" />,
  brk: <House tone="#7c93a6"><path d="M8 2v7l4 5" stroke="#3d93d0" strokeWidth="1.500" /></House>,
  cont: <House><path d="M9 9h6v6H9z" fill="#c8e6cf" stroke="#58a36b" /></House>,
  dem: <House><path d="M9 7h4l2 2v6H9z" fill="#4d9fe0" /></House>,
  obj: <House><path d="M8 9h7v6H8z" fill="#4d9fe0" /></House>,
  edit: <House><path d="m8 14 5-6 2 2-5 5z" fill="#e3a33c" /><path d="m13 8 2 2" stroke="#c8372f" strokeWidth="2" /></House>,
  pfile: <svg viewBox="0 0 16 16" className="w-3.5 h-3.5 shrink-0" fill="none" stroke="#777e86"><path d="M6 1h6l3 3v11H8" /><path d="m6 5 1.500 3.500L11 10l-3.500 1.500L6 15l-1.500-3.500L1 10l3.500-1.500z" /></svg>,
  pgrp: <svg viewBox="0 0 16 16" className="w-3.5 h-3.5 shrink-0" fill="none" stroke="#5f666e"><path d="M4 1H1v14h3M12 1h3v14h-3" /><path d="m8 4 1.500 3L12 8 9.500 9.500 8 12 6.500 9.500 4 8l2.500-1z" /></svg>,
};

// one letter per indent column: v line, t branch, m collapse box, p expand box, s blank
const treeRows = [
  { guides: 'vvm', icon: 'eg', label: 'EG', selected: true },
  { guides: 'vvvt', icon: 'mask', label: 'Masks' },
  { guides: 'vvvt', icon: 'water', label: 'Watersheds' },
  { guides: 'vvvm', icon: 'def', label: 'Definition' },
  { guides: 'vvvst', icon: 'bound', label: 'Boundaries' },
  { guides: 'vvvst', icon: 'brk', label: 'Breaklines' },
  { guides: 'vvvst', icon: 'cont', label: 'Contours' },
  { guides: 'vvvst', icon: 'dem', label: 'DEM Files' },
  { guides: 'vvvsp', icon: 'obj', label: 'Drawing Objects' },
  { guides: 'vvvsp', icon: 'edit', label: 'Edits' },
  { guides: 'vvvst', icon: 'pfile', label: 'Point Files' },
  { guides: 'vvvst', icon: 'pgrp', label: 'Point Groups' },
];

const Guide = ({ kind }) => (
  <svg viewBox="0 0 16 16" className="w-4 h-4 shrink-0" fill="none" stroke="#c3c6c9">
    {kind !== 's' && <path d="M8.500 0v16" />}
    {(kind === 't' || kind === 'm' || kind === 'p') && <path d="M8 8.500h8" />}
    {kind === 'm' && <><path d="M5.500 5.500h6v6h-6z" fill="#fff" stroke="#8c9197" /><path d="M6.500 8.500h4" stroke="#333" /></>}
    {kind === 'p' && <><path d="M5.500 4.500h6v6h-6z" fill="#fff" stroke="#8c9197" /><path d="M7 6h3v3H7z" fill="#222" stroke="none" /></>}
  </svg>
);

const Toolspace = () => {
  const [picked, setPicked] = useState('EG');
  return (
    <div className="flex flex-col w-[293px] pb-1.5">
      <div className="flex items-center gap-1 h-[18px] shrink-0 mt-0.5 px-1.5 bg-[#2b323f] text-[#d5dae0]">
        <span className="w-0.5 h-1.5 bg-[#596273]" />
        TOOLSPACE
      </div>
      <div className="flex items-center h-6 shrink-0 px-0.5 bg-[#3b4453] border-b border-[#2b323f]">
        <IconBtn name="drawing" label="Active drawing" className="w-4" icon="w-3 h-3" />
        <div className="ml-auto flex h-full">
          <IconBtn name="panorama" label="Panorama" icon="w-3 h-3" />
          <IconBtn name="preview" label="Preview" icon="w-3.5 h-3.5" />
          <IconBtn name="help" label="Toolspace help" icon="w-3.5 h-3.5" />
        </div>
      </div>
      <div className="flex items-center h-[18px] shrink-0 px-1 bg-[#4a566b] text-[#e2e6eb]">
        <select aria-label="View" className="flex-1 appearance-none bg-transparent outline-none">
          <option>Active Drawing View</option>
          <option>Master View</option>
        </select>
        <Caret />
      </div>
      <div className="flex shrink-0 mt-[3px] bg-white text-[#1d1d1d]">
        <ul role="tree" className="flex-1 h-[194px] pt-px pl-[5px] overflow-hidden">
          {treeRows.map((r) => (
            <li key={r.label} role="treeitem" className="flex h-4 items-center">
              {[...r.guides].map((g, i) => <Guide key={i} kind={g} />)}
              {treeIcons[r.icon]}
              {r.selected && (
                <svg viewBox="0 0 6 6" className="w-1.5 h-1.5 mb-2 ml-0.5"><path d="M0 0h6L0 6z" fill="#c9972d" /></svg>
              )}
              <button
                type="button"
                onClick={() => setPicked(r.label)}
                className={`text-left leading-[15px] h-[15px] ${r.selected ? 'ml-2.5 pl-1' : 'ml-2'} ${picked === r.label ? 'flex-1 bg-[#a09ea1]' : ''}`}
              >
                {r.label}
              </button>
            </li>
          ))}
        </ul>
        <div className="w-3.5 pl-1.5 pt-8 bg-[#f1f0f2]">
          <div className="w-0.5 h-12 bg-[#7f7d80]" />
        </div>
      </div>
      <div className="flex-1 mt-1.5 border border-[#79818d] bg-[#3b4252]" />
    </div>
  );
};

const sideTabs = ['Prospector', 'Settings', 'Survey', 'Toolbox'];

const SideTabs = () => {
  const [tab, setTab] = useState('Prospector');
  return (
    <div className="flex flex-col w-[18px] shrink-0 pt-[22px]">
      {sideTabs.map((t) => (
        <button
          type="button"
          key={t}
          onClick={() => setTab(t)}
          className={`h-[106px] flex items-center justify-center border border-l-0 border-[#252c37] text-[#cdd3da] ${tab === t ? 'bg-[#3f485a]' : 'bg-[#2f3644]'}`}
        >
          <span className="[writing-mode:vertical-rl] rotate-180">{t}</span>
        </button>
      ))}
    </div>
  );
};

const Model = () => (
  <svg className="absolute inset-0 w-full h-full" fontFamily="Liberation Sans, Arial, sans-serif">
    <g fill="none" strokeWidth="1">
      <path d="M51 0 337 231 575 422" stroke="#cfcf6c" />
      <path d="M0 153 334 422" stroke="#cfcf6c" />
      <path d="M0 56 290 289 455 422" stroke="#2fc04a" strokeDasharray="14 3 2 3" />
      <path d="M337 231 319 253M308 267l-18 22" stroke="#e8e8e8" />
      <path d="m150 165-14 17" stroke="#10106e" strokeWidth="2" />
      <path d="M11 369v40h41M8 406h7v7H8z" stroke="#b8b8b8" />
      <path d="m13 356 4 5 4-5M17 361v5M56 400l9 9M65 400l-9 9" stroke="#d0d0d0" />
    </g>
    <text x="314" y="262" fill="#f2f2f2" fontSize="7" textAnchor="middle">3.5000</text>
    <text transform="translate(244 112) rotate(39.200)" fill="#fff" stroke="#fff" strokeWidth=".5" fontSize="65">ROAD 02</text>
    <text transform="translate(45 175) rotate(38.700)" fill="#1df51d" stroke="#1df51d" strokeWidth=".5" fontSize="59">0+050</text>
  </svg>
);

const ViewCube = () => (
  <svg viewBox="0 0 84 84" className="absolute top-1.5 right-2 w-21 h-21" fontFamily="Liberation Sans, Arial, sans-serif" textAnchor="middle">
    <circle cx="42" cy="42" r="32" fill="none" stroke="#2d2d2d" strokeWidth="7" />
    <path d="M27 27h30v30H27z" fill="#b4b4b4" />
    <path d="M32 33h20v18H32z" fill="#a9a9a9" />
    <text x="42" y="45" fontSize="8" fill="#2c2c2c">TOP</text>
    <g fill="#c9c9c9" fontSize="12" fontWeight="bold">
      <text x="42" y="14">N</text>
      <text x="42" y="80">S</text>
      <text x="9" y="47">W</text>
      <text x="75" y="47">E</text>
    </g>
  </svg>
);

const NavBar = () => (
  <svg viewBox="0 0 26 172" className="absolute top-[134px] right-0.5 w-6.5 h-43" fill="none" stroke="#232323">
    <rect width="26" height="172" rx="2" fill="#434343" stroke="none" />
    <circle cx="22" cy="4" r="2" />
    <circle cx="22" cy="168" r="2" />
    <path d="M4 23a9 9 0 1 1 9 9M13 32c6 0 9-4 9-9v-8h-9" />
    <circle cx="13" cy="23" r="5" />
    <path d="M7 60c-4-4-1-5 1-2l-1-6c1-2 2 0 3 3 0-7 3-6 3 0 1-6 4-5 3 1 2-4 4-2 3 1-1 4-2 6-3 9h-6z" />
    <path d="m4 74 14 14M17 73 4 88M3 73h4M3 73v4M18 73v4" />
    <circle cx="18" cy="85" r="4" />
    <path d="M13 104v18M11 106l2-3 2 3M5 113c0-4 16-4 16 0s-16 4-16 0M10 108v12h5v-12z" />
    <path d="M4 145h13v12H4zM8 148l5 3-5 3zM6 141h4M12 141h4M18 141h4M20 145v6" />
    <path d="m12 41 1 1 1-1M12 98l1 1 1-1M12 129l1 1 1-1" />
  </svg>
);

const toolStrip = [
  ['t1', 't2', 't3', 't4', 't5', 't6', 't7', 't8', 't9', 't10', 't11', 't12', 't13'],
  ['t14'],
  ['t15', 't16', 't17'],
  ['t18', 't19', 't20', 't21', 't22'],
];

const ToolStrip = () => (
  <div className="w-[25px] shrink-0 flex flex-col items-center overflow-hidden bg-[#363f4f] border-l border-[#222a33]">
    <div className="w-3 h-1 shrink-0 mt-0.5 border-y border-dotted border-[#8b94a1]" />
    {toolStrip.map((group, i) => (
      <div key={i} className={`flex flex-col ${i ? 'border-t-2 border-[#dfe3e8]' : ''}`}>
        {group.map((n) => (
          <button type="button" key={n} aria-label={n} className="flex items-center justify-center w-4 h-[19px] shrink-0">
            <Icon name={n} className="w-3.5 h-3.5" />
          </button>
        ))}
      </div>
    ))}
  </div>
);

const CommandLine = () => (
  <div className="flex h-[50px] shrink-0 mt-0.5 font-['DejaVu_Sans_Mono',monospace]">
    <div className="flex flex-col items-center justify-between w-5 shrink-0 pt-1 pb-0.5 bg-[#2b323f] text-white">
      <span className="w-3.5 h-1 border-y border-dotted border-[#cfd5db]" />
      <button type="button" aria-label="Close command line"><Icon name="cross" className="w-3 h-3" /></button>
      <button type="button" aria-label="Customize"><Icon name="wrench" className="w-3.5 h-3.5" /></button>
    </div>
    <div className="flex flex-col flex-1">
      <div className="flex flex-col justify-end h-[33px] pb-px overflow-hidden px-0.5 bg-[#cbc9cd] text-[#161616] leading-3 whitespace-pre">
        <p>Automatic save to C:\Users\MCE\AppData\Local\Temp\Drawing1_1_13341_ca56ff57.sv$ ...</p>
        <p>Command:</p>
        <p>**** No System Variable Changed ****</p>
      </div>
      <div className="flex items-center flex-1 gap-1 pl-[3px] bg-white border-t border-[#55585e]">
        <Icon name="prompt" className="w-3.5 h-3.5" />
        <svg viewBox="0 0 8 5" className="w-1.5 h-1"><path d="M0 0h8L4 5z" fill="#444" /></svg>
        <input aria-label="Command" placeholder="Type a command" className="flex-1 italic outline-none text-[#333] placeholder:text-[#6a6a6a]" />
      </div>
    </div>
  </div>
);

const St = ({ name, on, className = '' }) => (
  <button
    type="button"
    aria-label={name}
    className={`flex items-center justify-center w-5 h-5 shrink-0 ${on ? 'bg-[#5d92c4]' : 'bg-[#363f4e]'} ${className}`}
  >
    <Icon name={name} className="w-3.5 h-3.5" />
  </button>
);

const StCaret = () => (
  <button type="button" aria-label="Options" className="flex items-center justify-center w-3.5 h-5 shrink-0 bg-[#363f4e]">
    <Caret />
  </button>
);

const StatusBar = () => (
  <footer className="flex items-center h-[29px] pb-1 shrink-0 pl-2.5 text-[#e2e6eb]">
    <IconBtn name="burger" label="Layouts" />
    <div className="relative flex items-center justify-center w-14 h-5 ml-1">
      <svg viewBox="0 0 56 19" preserveAspectRatio="none" className="absolute inset-0 w-full h-full">
        <path d="M7 0h49l-7 19H0z" fill="#3b4453" />
      </svg>
      <button type="button" className="relative font-bold text-white">Model</button>
    </div>
    <button type="button" className="w-12">Layout1</button>
    <Slash />
    <button type="button" className="w-12">Layout2</button>
    <Slash />
    <IconBtn name="plus" label="New layout" className="w-8" icon="w-3 h-3" />
    <Slash />

    <div className="ml-auto flex items-center">
      <button type="button" className="w-10 h-5 bg-[#363f4e]">MODEL</button>
      <St name="grid" className="ml-0.5" />
      <St name="snapDots" />
      <StCaret />
      <St name="ortho" className="ml-0.5" />
      <St name="polar" />
      <StCaret />
      <St name="iso" />
      <StCaret />
      <St name="otrack" on />
      <St name="osnap" on className="ml-px" />
      <StCaret />
      <St name="lineweight" />
      <St name="cycling" on />
      <St name="annoA" on className="ml-0.5" />
      <St name="annoB" />
      <St name="annoC" />
      <button type="button" className="flex items-center justify-center gap-1 w-11 h-5 bg-[#363f4e]">1:1000<Caret /></button>
      <St name="gear" className="ml-0.5" />
      <StCaret />
      <St name="plus" />
      <St name="calc" className="ml-0.5" />
      <St name="shapes" className="ml-0.5" />
      <St name="elev" className="ml-0.5" />
      <button type="button" className="w-9 h-5 bg-[#363f4e]">3.500</button>
      <St name="target" className="ml-0.5" />
      <StCaret />
      <St name="tag" on />
      <St name="plot" className="ml-1" />
      <St name="full" className="ml-1" />
      <St name="burger" className="ml-0.5" />
    </div>
  </footer>
);

export default function App() {
  return (
    <div className="flex flex-col h-screen bg-black py-5 text-[10px] leading-[14px] text-[#dfe3e8] font-['Open_Sans','Noto_Sans',sans-serif]">
      <div className="flex flex-col flex-1 min-h-0 rounded-lg border border-[#7fc3da] bg-[#222a33] px-[3px] overflow-hidden">
        <TitleBar />
        <MenuBar />
        <RibbonTabs />
        <Ribbon />
        <FileTabs />
        <main className="flex flex-1 min-h-0 bg-[#3b4453] border-t border-[#4a525e]">
          <Toolspace />
          <SideTabs />
          <div className="flex flex-col flex-1 min-w-0 ml-[5px] pb-[3px]">
            <div className="flex flex-1 min-h-0">
              <div className="relative flex-1 bg-black overflow-hidden">
                <Model />
                <ViewCube />
                <button type="button" className="absolute top-[101px] right-8 w-[38px] h-3 rounded-sm bg-[#8d8a91] text-[8px] leading-3 text-left pl-1 text-[#d5d2d8]">WCS</button>
                <NavBar />
              </div>
              <ToolStrip />
            </div>
            <CommandLine />
          </div>
        </main>
        <StatusBar />
      </div>
    </div>
  );
}
